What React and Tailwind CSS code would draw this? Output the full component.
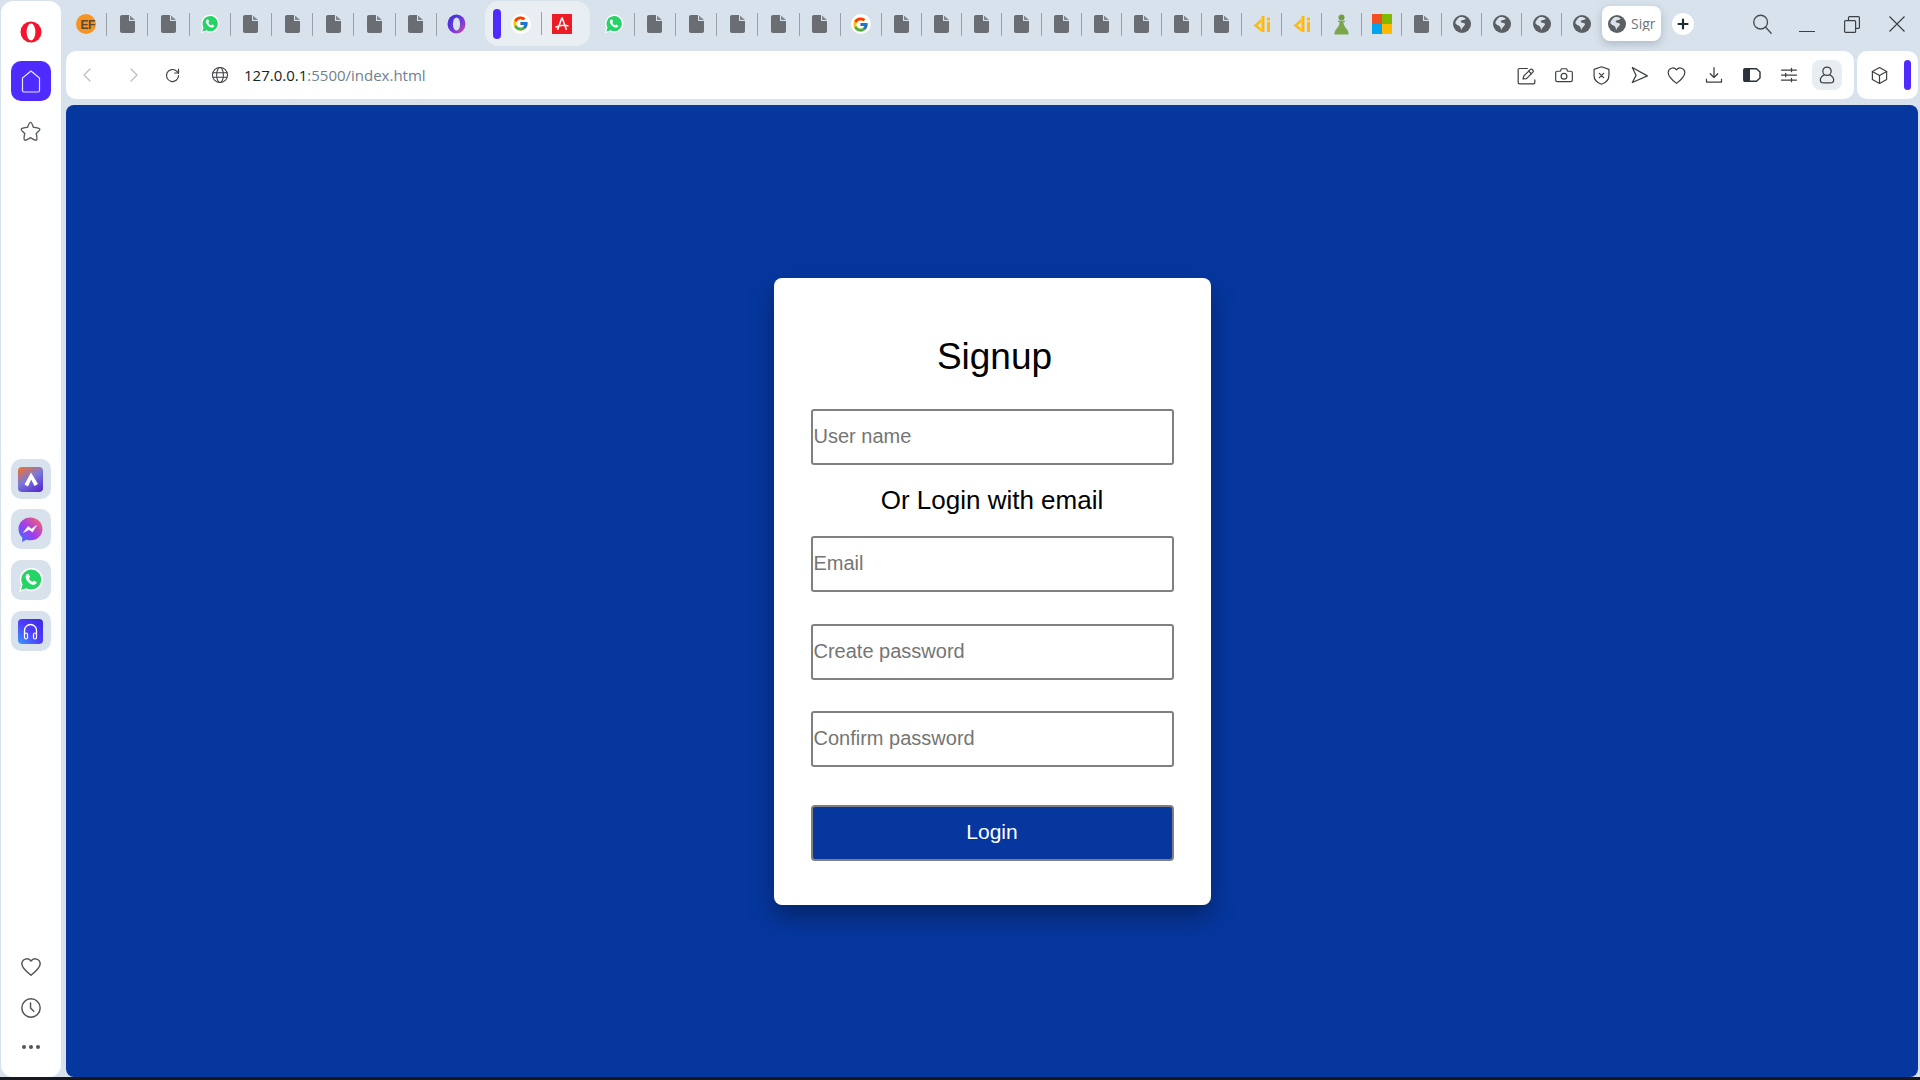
import React from "react";
import { FcGoogle } from "react-icons/fc";

const Sep = () => <div className="w-px h-[23px] bg-[#9aa0a6] shrink-0" />;

const Stroke = ({ size = 18, color = "#3c4043", sw = 1.6, children, vb = 24 }) => (
  <svg width={size} height={size} viewBox={`0 0 ${vb} ${vb}`} fill="none" stroke={color} strokeWidth={sw} strokeLinecap="round" strokeLinejoin="round">
    {children}
  </svg>
);

const Doc = () => (
  <svg width="15" height="18" viewBox="0 0 15 18">
    <path d="M2 0H9V6H15V16a2 2 0 0 1-2 2H2a2 2 0 0 1-2-2V2a2 2 0 0 1 2-2Z" fill="#6a6e72" />
    <path d="M10 0.5L15 5H10Z" fill="#83888d" />
  </svg>
);

const Globe = ({ size = 18 }) => (
  <svg width={size} height={size} viewBox="0 0 18 18">
    <circle cx="9" cy="9" r="9" fill="#5c5f62" />
    <path d="M7 2C9 1.6 11.5 2.2 12.8 3.4 11.5 5.2 9.4 4.6 8 5.8 7 7 8.6 7.9 10.5 8 12.6 8.2 12.4 9.8 11 11 9.6 12.2 8.8 13.8 8 15.2 7.7 13.4 7.9 12.2 6.6 11.2 5.2 10.2 3.2 9.8 2.2 8 3 5.4 4.8 3.2 7 2Z" fill="#d8e2ec" />
  </svg>
);

const Whats = ({ size = 20 }) => (
  <svg width={size} height={size} viewBox="0 0 24 24">
    <path d="M1 23L2.8 16.5A10.8 10.8 0 1 1 7 20.9Z" fill="#fff" />
    <path d="M2.8 21.2L4.2 16.2A9.2 9.2 0 1 1 7.6 19.6Z" fill="#25d366" />
    <path d="M8.6 6.8c.4-.4 1-.4 1.3.1l1 1.7c.2.4.1.8-.2 1.1l-.7.7c.7 1.5 1.9 2.7 3.3 3.4l.8-.8c.3-.3.7-.4 1.1-.2l1.7 1c.4.3.5.9.1 1.3-1 1.2-2.2 1.7-3.7 1.2-3-.9-5.5-3.5-6.2-6.4-.3-1.3.3-2.6 1.5-3.6Z" fill="#fff" />
  </svg>
);

const Ef = () => (
  <div className="relative w-[20px] h-[20px] rounded-full bg-[#f7931e] flex items-center justify-center">
    <span className="font-['Liberation_Sans'] font-bold text-[12px] leading-none text-[#5a4a3a] tracking-[-0.5px] ml-[3px] mt-px">EF</span>
  </div>
);

const OperaTab = () => (
  <svg width="19" height="20" viewBox="0 0 19 20">
    <defs>
      <linearGradient id="opg" x1="0" y1="0" x2="1" y2="1">
        <stop offset="0" stopColor="#2f2be0" />
        <stop offset="0.6" stopColor="#7a3ad8" />
        <stop offset="1" stopColor="#e04a9a" />
      </linearGradient>
    </defs>
    <ellipse cx="9.5" cy="10" rx="9" ry="9.5" fill="url(#opg)" />
    <ellipse cx="9.5" cy="10" rx="3.6" ry="6.6" fill="#d8e2ec" />
  </svg>
);

const GoogleFav = () => (
  <div className="w-[20px] h-[20px] rounded-full bg-white flex items-center justify-center">
    <FcGoogle size={17} />
  </div>
);

const Acrobat = () => (
  <svg width="20" height="20" viewBox="0 0 20 20">
    <rect width="20" height="20" fill="#ec1c24" />
    <path d="M10 3.5L5.5 16M10 3.5L14.5 16M3.5 13.2C8 11.2 12.5 10.8 16.5 12" stroke="#fff" strokeWidth="1.5" fill="none" />
  </svg>
);

const Di = () => (
  <svg width="18" height="17" viewBox="0 0 18 17">
    <path d="M8 3L.5 9.5L8 15.5V12.2L4.5 9.5L8 6.3Z" fill="#fdb913" />
    <rect x="8.5" y="0" width="3" height="16" fill="#fdb913" />
    <rect x="14" y="6" width="3" height="10" fill="#fdb913" />
    <rect x="14" y="1.5" width="3" height="3" fill="#fdb913" />
  </svg>
);

const Pawn = () => (
  <svg width="15" height="21" viewBox="0 0 15 21">
    <circle cx="7.5" cy="3.4" r="3" fill="#6f9f45" />
    <path d="M4 6.8H11V8H9.4C9.6 11 11 13 12.6 15C14 16.5 14.6 18.5 14.6 20.5H.4C.4 18.5 1 16.5 2.4 15C4 13 5.4 11 5.6 8H4Z" fill="#7ba64c" />
  </svg>
);

const Ms = () => (
  <div className="grid grid-cols-2 w-[20px] h-[20px]">
    <div className="bg-[#f25022]" />
    <div className="bg-[#7fba00]" />
    <div className="bg-[#00a4ef]" />
    <div className="bg-[#ffb900]" />
  </div>
);

const Tab = ({ wide, sep = true, children }) => (
  <div className="flex items-center shrink-0">
    <div className={wide ? "w-[40.2px] flex justify-center" : "w-[39px] flex justify-center"}>{children}</div>
    {sep ? <Sep /> : <div className="w-px" />}
  </div>
);

const TabStrip = () => (
  <div className="h-[48px] mb-[3px] flex items-center shrink-0">
    <Tab wide><Ef /></Tab>
    <Tab wide><Doc /></Tab>
    <Tab wide><Doc /></Tab>
    <Tab wide><Whats /></Tab>
    <Tab wide><Doc /></Tab>
    <Tab wide><Doc /></Tab>
    <Tab wide><Doc /></Tab>
    <Tab wide><Doc /></Tab>
    <Tab wide><Doc /></Tab>
    <Tab wide sep={false}><OperaTab /></Tab>
    <div className="ml-[7px] w-[105px] h-[45px] self-start mt-px rounded-[14px] bg-[#e9eef3] flex items-center pl-[8px] shrink-0">
      <div className="w-[8px] h-[30px] rounded-full bg-[#4f2bff]" />
      <div className="ml-[10px] w-[20px]"><GoogleFav /></div>
      <div className="ml-[10px]"><Sep /></div>
      <div className="ml-[10px]"><Acrobat /></div>
    </div>
    <div className="ml-[4px] w-[40px] flex justify-center shrink-0"><Whats /></div>
    <Sep />
    <Tab wide><Doc /></Tab>
    <Tab wide><Doc /></Tab>
    <Tab wide><Doc /></Tab>
    <Tab wide><Doc /></Tab>
    <Tab wide><Doc /></Tab>
    <Tab wide><GoogleFav /></Tab>
    <Tab><Doc /></Tab>
    <Tab><Doc /></Tab>
    <Tab><Doc /></Tab>
    <Tab><Doc /></Tab>
    <Tab><Doc /></Tab>
    <Tab><Doc /></Tab>
    <Tab><Doc /></Tab>
    <Tab><Doc /></Tab>
    <Tab><Doc /></Tab>
    <Tab><Di /></Tab>
    <Tab><Di /></Tab>
    <Tab><Pawn /></Tab>
    <Tab><Ms /></Tab>
    <Tab><Doc /></Tab>
    <Tab><Globe /></Tab>
    <Tab><Globe /></Tab>
    <Tab><Globe /></Tab>
    <Tab sep={false}><Globe /></Tab>
    <div className="w-[59px] h-[35px] self-start mt-[6px] rounded-lg bg-white shadow-[0_3px_8px_rgba(90,110,130,0.35)] flex items-center pl-[6px] overflow-hidden shrink-0">
      <Globe size={18} />
      <span className="ml-[5px] font-['Open_Sans'] text-[14px] leading-none text-[#70757a] whitespace-nowrap overflow-hidden w-[24px]">Signup</span>
    </div>
    <div className="ml-[11px] w-[22px] h-[22px] rounded-full bg-white flex items-center justify-center shrink-0">
      <svg width="12" height="12" viewBox="0 0 12 12"><path d="M6 1.5V10.5M1.5 6H10.5" stroke="#202a33" strokeWidth="2.2" strokeLinecap="round" /></svg>
    </div>
    <div className="ml-[57px] shrink-0">
      <Stroke size={22} color="#4a4d50" sw={1.5}><circle cx="10.5" cy="10" r="7.5" /><path d="M16 15.5L22 22" /></Stroke>
    </div>
    <div className="ml-[26px] w-[16px] h-[1px] mt-[14px] bg-[#3c4043] shrink-0" />
    <div className="ml-[29px] shrink-0">
      <svg width="16" height="17" viewBox="0 0 16 17" fill="none" stroke="#3c4043" strokeWidth="1.2"><rect x="0.6" y="4.6" width="11" height="11.8" rx="1" /><path d="M4.5 4.5V1.6a1 1 0 0 1 1-1H14.4a1 1 0 0 1 1 1V11.4a1 1 0 0 1-1 1H11.5" /></svg>
    </div>
    <div className="ml-[29px] shrink-0">
      <svg width="16" height="16" viewBox="0 0 16 16" stroke="#3c4043" strokeWidth="1.2"><path d="M.5.5L15.5 15.5M15.5.5L.5 15.5" /></svg>
    </div>
  </div>
);

const Slot = ({ children }) => <div className="w-[37.6px] flex justify-center shrink-0">{children}</div>;

const AddressBar = () => (
  <div className="h-[48px] flex gap-[3px] shrink-0 mr-[2px]">
    <div className="flex-1 bg-white rounded-[10px] flex items-center pl-[13px] pr-[12px]">
      <Stroke size={16} color="#c2c5c8" sw={1.5} vb={16}><path d="M11 2L5 8L11 14" /></Stroke>
      <div className="ml-[31px]"><Stroke size={16} color="#c2c5c8" sw={1.5} vb={16}><path d="M5 2L11 8L5 14" /></Stroke></div>
      <div className="ml-[22px]"><Stroke size={17} color="#3c4043" sw={1.7}><path d="M20.5 12a8.5 8.5 0 1 1-2.6-6.1L20.5 8.5" /><path d="M20.5 3V8.5H15" /></Stroke></div>
      <div className="ml-[30px]"><Stroke size={18} color="#3c4043" sw={1.4}><circle cx="12" cy="12" r="10" /><ellipse cx="12" cy="12" rx="4.5" ry="10" /><path d="M2.5 9H21.5M2.5 15H21.5" /></Stroke></div>
      <span className="ml-[15px] mt-px font-['Open_Sans'] text-[15px] leading-none whitespace-nowrap text-[#6f7f90]"><span className="text-[#202124]">127.0.0.1</span>:5500/index.html</span>
      <div className="ml-auto flex items-center">
        <div className="ml-[2px]" />
        <Slot><Stroke size={21} sw={1.4}><path d="M13 4H4a1.5 1.5 0 0 0-1.5 1.5V20A1.5 1.5 0 0 0 4 21.5H20a1.5 1.5 0 0 0 1.5-1.5V17" /><path d="M8 16L9 12.5L16 5.5a2 2 0 0 1 3 3L12 15.5L8 16Z" /><path d="M14.5 7L17.5 10" /></Stroke></Slot>
        <Slot><Stroke size={20} sw={1.4}><path d="M4 7.5H7.5L9 4.5H15L16.5 7.5H20A2 2 0 0 1 22 9.5V18A2 2 0 0 1 20 20H4A2 2 0 0 1 2 18V9.5A2 2 0 0 1 4 7.5Z" /><circle cx="12" cy="13.5" r="3.5" /></Stroke></Slot>
        <Slot><Stroke size={21} sw={1.4}><path d="M12 2L20.5 5V12C20.5 17 16.5 20.5 12 22C7.5 20.5 3.5 17 3.5 12V5Z" /><path d="M9.5 9.5L14.5 14.5M14.5 9.5L9.5 14.5" /></Stroke></Slot>
        <Slot><Stroke size={20} sw={1.5}><path d="M4 3L22 13L4 21L8.5 12.5Z" /></Stroke></Slot>
        <Slot><Stroke size={21} sw={1.4}><path d="M12 21C5.5 16 2.5 12.5 2.5 8.5A5.3 5.3 0 0 1 12 5.5A5.3 5.3 0 0 1 21.5 8.5C21.5 12.5 18.5 16 12 21Z" /></Stroke></Slot>
        <Slot><Stroke size={20} sw={1.5}><path d="M12 3V15M7.5 10.5L12 15L16.5 10.5" /><path d="M3 17V20.5H21V17" /></Stroke></Slot>
        <Slot>
          <svg width="18" height="14" viewBox="0 0 18 14"><path d="M2 .75H13.5L17 4V10L13.5 13.25H2A1.25 1.25 0 0 1 .75 12V2A1.25 1.25 0 0 1 2 .75Z" fill="#fff" stroke="#2a3138" strokeWidth="1.4" strokeLinejoin="round" /><path d="M1 1H7V13H1Z" fill="#2a3138" /></svg>
        </Slot>
        <Slot><Stroke size={20} sw={1.5}><path d="M3 6H21M3 12H21M3 18H21" /><path d="M15 4V8M8 10V14M15 16V20" /></Stroke></Slot>
        <div className="ml-[4px] w-[30px] h-[30px] rounded-lg bg-[#e8edf2] flex items-center justify-center">
          <Stroke size={20} sw={1.5}><circle cx="12" cy="7.5" r="5" /><path d="M8.5 12C5.5 13.5 4 15.5 4 18C4 20 5.5 21.5 8 21.5H16C18.5 21.5 20 20 20 18C20 15.5 18.5 13.5 15.5 12" /></Stroke>
        </div>
      </div>
    </div>
    <div className="w-[61px] bg-white rounded-[10px] flex items-center pl-[13px] pr-[7px] justify-between">
      <Stroke size={19} sw={1.5}><path d="M12 2L21 7V17L12 22L3 17V7Z" /><path d="M3 7L12 12L21 7M12 12V22" /></Stroke>
      <div className="w-[7px] h-[30px] rounded-full bg-[#4f2bff]" />
    </div>
  </div>
);

const AppBox = ({ children, className }) => (
  <div className={`w-[40px] h-[40px] rounded-[10px] bg-[#d8e2ec] flex items-center justify-center ${className}`}>{children}</div>
);

const Sidebar = () => (
  <div className="w-[60px] ml-px mt-px bg-white rounded-xl flex flex-col items-center shrink-0 pt-[20px] pb-[28px] pr-px">
    <svg width="22" height="22" viewBox="0 0 22 22">
      <ellipse cx="11" cy="11" rx="10.5" ry="10.5" fill="#f5142e" />
      <ellipse cx="11" cy="11" rx="4.4" ry="8.4" fill="#fff" />
    </svg>
    <div className="mt-[18px] w-[40px] h-[40px] rounded-[10px] bg-[#4f2bff] flex items-center justify-center">
      <svg width="20" height="23" viewBox="0 0 20 23" fill="none" stroke="#e8e4ff" strokeWidth="1.2" strokeLinejoin="round"><path d="M10 1L18.5 8V20.5A1.5 1.5 0 0 1 17 22H3A1.5 1.5 0 0 1 1.5 20.5V8Z" /></svg>
    </div>
    <div className="mt-[19px]">
      <Stroke size={23} color="#5a5f65" sw={1.5}><path d="M12 2.5C13 2.5 13.5 3.2 15 7.5C19.5 8 21.5 8.5 21.8 9.5C22 10.5 20.5 11.5 18 14.2C19 18.5 19 20.5 18 21C17 21.5 15.5 20.5 12 18.5C8.5 20.5 7 21.5 6 21C5 20.5 5 18.5 6 14.2C3.5 11.5 2 10.5 2.2 9.5C2.5 8.5 4.5 8 9 7.5C10.5 3.2 11 2.5 12 2.5Z" /></Stroke>
    </div>
    <AppBox className="mt-[316px]">
      <svg width="25" height="25" viewBox="0 0 25 25">
        <defs>
          <linearGradient id="ar" x1="0.2" y1="0" x2="0.8" y2="1">
            <stop offset="0" stopColor="#e8703a" />
            <stop offset="0.45" stopColor="#7a7ad8" />
            <stop offset="1" stopColor="#5a2bd0" />
          </linearGradient>
        </defs>
        <rect width="25" height="25" rx="4" fill="url(#ar)" />
        <path d="M13 5.5L6.5 17.5L10 19.5L13.2 12.5L16.5 19L20 17Z" fill="#fff" />
      </svg>
    </AppBox>
    <AppBox className="mt-[10px]">
      <svg width="25" height="25" viewBox="0 0 25 25">
        <defs>
          <linearGradient id="ms" x1="0" y1="1" x2="1" y2="0">
            <stop offset="0" stopColor="#2b7bff" />
            <stop offset="0.45" stopColor="#a03bf0" />
            <stop offset="1" stopColor="#ff6a5a" />
          </linearGradient>
        </defs>
        <path d="M12.5 .5C5.8.5.5 5.4.5 12c0 3.4 1.4 6.4 3.7 8.4V25l4-2.3c1.3.4 2.8.6 4.3.6 6.7 0 12-4.9 12-11.3S19.2.5 12.5.5Z" fill="url(#ms)" />
        <path d="M5.5 15.5L10 9.5L13.5 12L18.5 8.5L14.5 15L11 12.5Z" fill="#fff" stroke="#fff" strokeWidth=".6" strokeLinejoin="round" />
      </svg>
    </AppBox>
    <AppBox className="mt-[11px]"><Whats size={26} /></AppBox>
    <AppBox className="mt-[11px]">
      <svg width="25" height="25" viewBox="0 0 25 25">
        <defs>
          <linearGradient id="mu" x1="0" y1="1" x2="1" y2="0">
            <stop offset="0" stopColor="#3a9bff" />
            <stop offset="0.5" stopColor="#4f3bff" />
            <stop offset="1" stopColor="#3a2be0" />
          </linearGradient>
        </defs>
        <rect width="25" height="25" rx="4" fill="url(#mu)" />
        <path d="M6.5 16V11.5a6 6 0 0 1 12 0V16" fill="none" stroke="#fff" strokeWidth="1.3" />
        <rect x="6.5" y="14" width="3" height="6" rx="1.5" fill="none" stroke="#fff" strokeWidth="1.2" />
        <rect x="15.5" y="14" width="3" height="6" rx="1.5" fill="none" stroke="#fff" strokeWidth="1.2" />
      </svg>
    </AppBox>
    <div className="mt-auto">
      <Stroke size={22} color="#50555b" sw={1.6}><path d="M12 21C5.5 16 2 12.5 2 8.5A5.5 5.5 0 0 1 12 5.5A5.5 5.5 0 0 1 22 8.5C22 12.5 18.5 16 12 21Z" /></Stroke>
    </div>
    <div className="mt-[19px]">
      <Stroke size={22} color="#50555b" sw={1.6}><circle cx="12" cy="12" r="10" /><path d="M11.5 6.5V12L15 15.5" /></Stroke>
    </div>
    <div className="mt-[26px] flex gap-[3px]">
      <div className="w-[4px] h-[4px] rounded-full bg-[#50555b]" />
      <div className="w-[4px] h-[4px] rounded-full bg-[#50555b]" />
      <div className="w-[4px] h-[4px] rounded-full bg-[#50555b]" />
    </div>
  </div>
);

const Field = ({ placeholder, className }) => (
  <input
    readOnly
    placeholder={placeholder}
    className={`block w-[363px] h-[56px] border-2 border-[#808080] rounded-[3px] pl-px bg-white font-['Liberation_Sans'] text-[20px] text-black placeholder:text-[#757575] outline-none ${className}`}
  />
);

const Card = () => (
  <div className="w-[437px] h-[627px] bg-white rounded-lg shadow-[0_12px_24px_rgba(0,0,0,0.35)] pl-[37px] pt-[58px] font-['Liberation_Sans'] text-black">
    <h1 className="w-[368px] h-[42px] text-center text-[37px] leading-[42px] font-normal">Signup</h1>
    <Field placeholder="User name" className="mt-[31px]" />
    <p className="w-[363px] mt-[20px] h-[30px] text-center text-[26px] leading-[30px]">Or Login with email</p>
    <Field placeholder="Email" className="mt-[21px]" />
    <Field placeholder="Create password" className="mt-[32px]" />
    <Field placeholder="Confirm password" className="mt-[31px]" />
    <button className="block mt-[38px] w-[363px] h-[56px] pb-[2px] bg-[#06379f] border-2 border-[#808080] rounded-[4px] text-white text-[21px]">Login</button>
  </div>
);

export default function App() {
  return (
    <div className="w-[1920px] h-[1080px] bg-[#d8e2ec] flex flex-col overflow-hidden">
      <div className="flex-1 flex min-h-0">
        <Sidebar />
        <div className="ml-[5px] flex-1 flex flex-col min-w-0">
          <TabStrip />
          <AddressBar />
          <main className="mt-[6px] mr-[2px] flex-1 bg-[#06379f] rounded-lg flex items-center justify-center">
            <Card />
          </main>
        </div>
      </div>
      <div className="h-[3px] bg-[#15181c] shrink-0" />
    </div>
  );
}
